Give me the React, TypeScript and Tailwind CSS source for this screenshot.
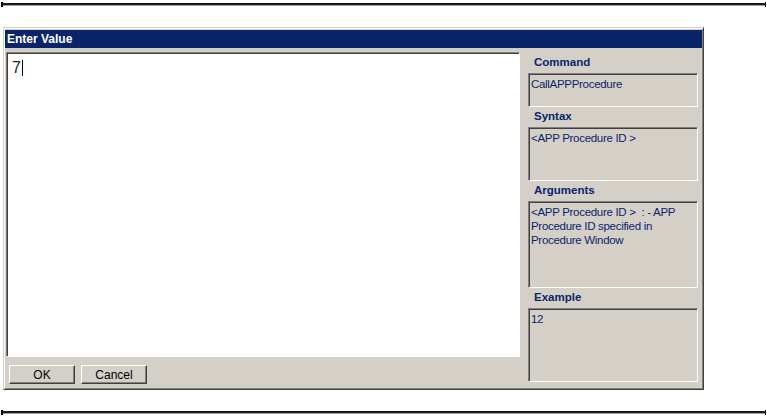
const sunken =
  'border border-t-[#808080] border-l-[#808080] border-b-white border-r-white shadow-[inset_1px_1px_0_#404040]';
const raisedBtn =
  'border border-t-white border-l-white border-b-[#404040] border-r-[#404040] shadow-[inset_-1px_-1px_0_#808080]';

function Rule() {
  return (
    <div className="ml-px w-[765px] h-[5px] border-l-2 border-r border-black flex flex-col">
      <div className="mt-px h-[2px] bg-[#1a1a1a]" />
      <div className="h-px bg-[#a0a0a0]" />
    </div>
  );
}

type InfoProps = { label: string; height: string; children: React.ReactNode };

function InfoBox({ label, height, children }: InfoProps) {
  return (
    <div className="flex flex-col">
      <div className="h-[20px] flex items-center pl-[6px] text-[11.5px] font-bold text-[#0a246a]">
        {label}
      </div>
      <div className={`${sunken} ${height} bg-[#d4d0c8] px-[2px] pt-[3px] text-[11.5px] leading-[14px] tracking-[-0.3px] text-[#0a246a]`}>
        {children}
      </div>
    </div>
  );
}

export default function App() {
  return (
    <div className="w-[767px] h-[416px] bg-white pt-[2px] font-['Liberation_Sans',Arial,sans-serif] overflow-hidden">
      <Rule />

      {/* dialog window */}
      <div className="mt-[20px] ml-[3px] w-[701px] h-[363px] bg-[#d4d0c8] p-px border border-t-[#d4d0c8] border-l-[#d4d0c8] border-b-[#404040] border-r-[#404040] shadow-[inset_1px_1px_0_#fff,inset_-1px_-1px_0_#808080] flex flex-col">
        <div className="mt-px h-[18px] bg-[#0a246a] flex items-center px-[2px] text-[12px] font-bold text-white">
          Enter Value
        </div>

        <div className="flex">
          <div className="ml-px mt-[4px] flex flex-col">
            <div className={`${sunken} w-[514px] h-[305px] bg-white pl-[5px] pt-[3px]`}>
              <span className="text-[16px] leading-[17px] text-[#222]">7</span>
              <span className="inline-block ml-px w-px h-[16px] bg-black align-[-3px]" />
            </div>
            <div className="mt-[8px] flex gap-[6px] ml-[3px]">
              <button className={`${raisedBtn} w-[66px] h-[19px] text-[12px] leading-none text-black`}>OK</button>
              <button className={`${raisedBtn} w-[66px] h-[19px] text-[12px] leading-none text-black`}>Cancel</button>
            </div>
          </div>

          <div className="ml-[8px] pt-[5px] w-[170px] flex flex-col">
            <InfoBox label="Command" height="h-[34px]">CallAPPProcedure</InfoBox>
            <InfoBox label="Syntax" height="h-[54px]">&lt;APP Procedure ID &gt;</InfoBox>
            <InfoBox label="Arguments" height="h-[87px]">
              &lt;APP Procedure ID &gt;&nbsp; : - APP Procedure ID specified in Procedure Window
            </InfoBox>
            <InfoBox label="Example" height="h-[74px]">12</InfoBox>
          </div>
        </div>
      </div>

      <div className="mt-[20px]">
        <Rule />
      </div>
    </div>
  );
}
